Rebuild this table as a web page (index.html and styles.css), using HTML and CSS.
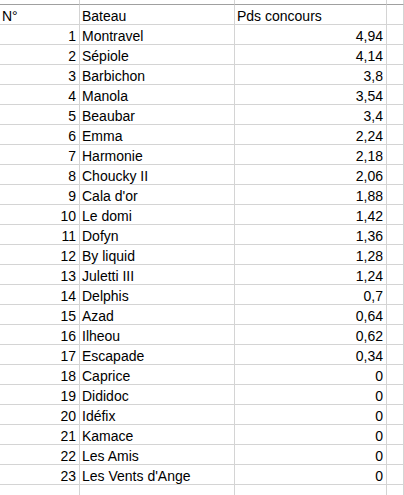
FILE: index.html
```html
<!DOCTYPE html>
<html lang="fr">
<head>
<meta charset="utf-8">
<title>Classement</title>
<link rel="stylesheet" href="styles.css">
</head>
<body>
<div class="sheet">
  <div class="cell top"></div><div class="cell top"></div><div class="cell top"></div><div class="cell top"></div>
  <div class="cell">N°</div><div class="cell">Bateau</div><div class="cell">Pds concours</div><div class="cell"></div>
  <div class="cell num">1</div><div class="cell">Montravel</div><div class="cell num">4,94</div><div class="cell"></div>
  <div class="cell num">2</div><div class="cell">Sépiole</div><div class="cell num">4,14</div><div class="cell"></div>
  <div class="cell num">3</div><div class="cell">Barbichon</div><div class="cell num">3,8</div><div class="cell"></div>
  <div class="cell num">4</div><div class="cell">Manola</div><div class="cell num">3,54</div><div class="cell"></div>
  <div class="cell num">5</div><div class="cell">Beaubar</div><div class="cell num">3,4</div><div class="cell"></div>
  <div class="cell num">6</div><div class="cell">Emma</div><div class="cell num">2,24</div><div class="cell"></div>
  <div class="cell num">7</div><div class="cell">Harmonie</div><div class="cell num">2,18</div><div class="cell"></div>
  <div class="cell num">8</div><div class="cell">Choucky II</div><div class="cell num">2,06</div><div class="cell"></div>
  <div class="cell num">9</div><div class="cell">Cala d'or</div><div class="cell num">1,88</div><div class="cell"></div>
  <div class="cell num">10</div><div class="cell">Le domi</div><div class="cell num">1,42</div><div class="cell"></div>
  <div class="cell num">11</div><div class="cell">Dofyn</div><div class="cell num">1,36</div><div class="cell"></div>
  <div class="cell num">12</div><div class="cell">By liquid</div><div class="cell num">1,28</div><div class="cell"></div>
  <div class="cell num">13</div><div class="cell">Juletti III</div><div class="cell num">1,24</div><div class="cell"></div>
  <div class="cell num">14</div><div class="cell">Delphis</div><div class="cell num">0,7</div><div class="cell"></div>
  <div class="cell num">15</div><div class="cell">Azad</div><div class="cell num">0,64</div><div class="cell"></div>
  <div class="cell num">16</div><div class="cell">Ilheou</div><div class="cell num">0,62</div><div class="cell"></div>
  <div class="cell num">17</div><div class="cell">Escapade</div><div class="cell num">0,34</div><div class="cell"></div>
  <div class="cell num">18</div><div class="cell">Caprice</div><div class="cell num">0</div><div class="cell"></div>
  <div class="cell num">19</div><div class="cell">Dididoc</div><div class="cell num">0</div><div class="cell"></div>
  <div class="cell num">20</div><div class="cell">Idéfix</div><div class="cell num">0</div><div class="cell"></div>
  <div class="cell num">21</div><div class="cell">Kamace</div><div class="cell num">0</div><div class="cell"></div>
  <div class="cell num">22</div><div class="cell">Les Amis</div><div class="cell num">0</div><div class="cell"></div>
  <div class="cell num">23</div><div class="cell">Les Vents d'Ange</div><div class="cell num">0</div><div class="cell"></div>
  <div class="cell"></div><div class="cell"></div><div class="cell"></div><div class="cell"></div>
</div>
</body>
</html>
```
FILE: styles.css
```css
html, body {
  margin: 0;
  padding: 0;
  background: #ffffff;
  overflow: hidden;
}
.sheet {
  display: grid;
  grid-template-columns: 80px 155px 152px 17px;
  grid-auto-rows: 20px;
  font-family: "Liberation Sans", Arial, sans-serif;
  font-size: 14px;
  line-height: 16px;
  color: #000;
}
.cell {
  box-sizing: border-box;
  border-right: 1px solid #d4d4d4;
  border-bottom: 1px solid #d4d4d4;
  padding: 3px 2px 0 2px;
  white-space: nowrap;
  overflow: visible;
}
.cell.top {
  height: 5px;
  padding: 0;
  border-bottom-color: #a0a0a0;
}
.sheet > .cell.top { align-self: start; }
.sheet { grid-template-rows: 5px; }
.num {
  text-align: right;
  padding-right: 3px;
}
```
